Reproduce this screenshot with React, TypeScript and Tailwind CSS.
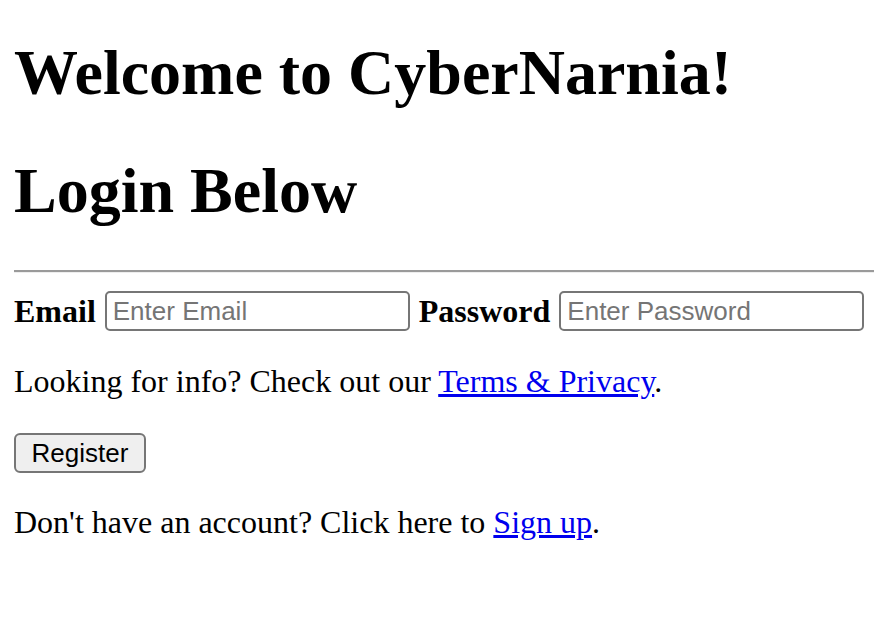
export default function App() {
  return (
    <div className="min-h-[640px] bg-white pl-[14px] text-black font-['Liberation_Serif',serif]">
      <h1 className="pt-[36px] text-[64px] font-bold leading-[74px]">Welcome to CyberNarnia!</h1>
      <h1 className="mt-[44px] text-[64px] font-bold leading-[74px]">Login Below</h1>
      <div className="mt-[42px] border-t-2 border-b border-t-[#9a9a9a] border-b-[#eeeeee]" />
      <div className="mt-[18px] flex items-center text-[32px] leading-[37px]">
        <label className="font-bold">Email</label>
        <input
          type="email"
          placeholder="Enter Email"
          className="ml-[9px] h-[40px] w-[305px] rounded-[5px] border-2 border-[#767676] px-[6px] text-[26px] font-['Liberation_Sans',Arial,sans-serif] placeholder:text-[#757575] outline-none"
        />
        <label className="ml-[9px] font-bold">Password</label>
        <input
          type="password"
          placeholder="Enter Password"
          className="ml-[9px] h-[40px] w-[305px] rounded-[5px] border-2 border-[#767676] px-[6px] text-[26px] font-['Liberation_Sans',Arial,sans-serif] placeholder:text-[#757575] outline-none"
        />
      </div>
      <p className="mt-[32px] text-[32px] leading-[37px]">
        Looking for info? Check out our{" "}
        <a href="#" className="text-[#0000ee] underline">Terms &amp; Privacy</a>.
      </p>
      <button className="mt-[33px] h-[40px] w-[132px] rounded-[6px] border-2 border-[#767676] bg-[#efefef] text-[26px] leading-none font-['Liberation_Sans',Arial,sans-serif]">
        Register
      </button>
      <p className="mt-[31px] text-[32px] leading-[37px]">
        Don't have an account? Click here to{" "}
        <a href="#" className="text-[#0000ee] underline">Sign up</a>.
      </p>
    </div>
  );
}
